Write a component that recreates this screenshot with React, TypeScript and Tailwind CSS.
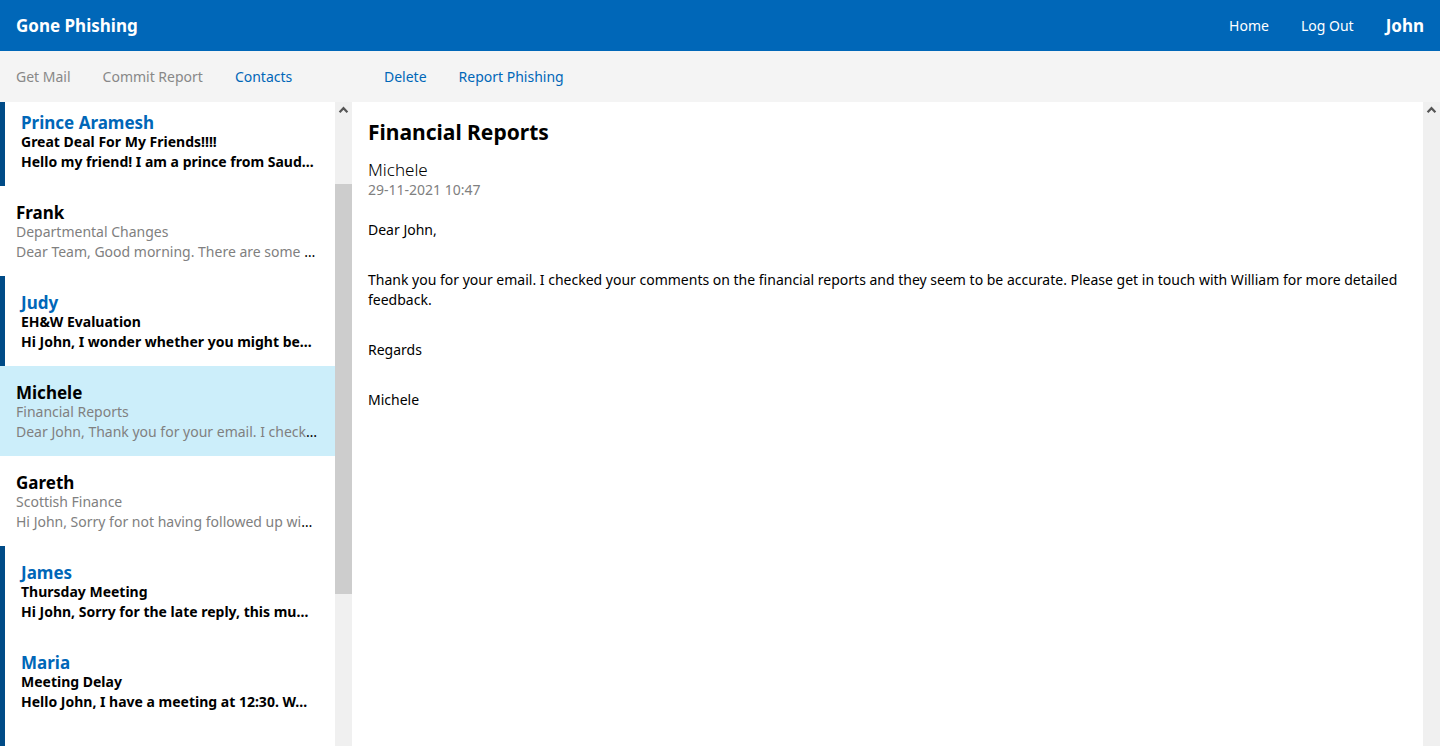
import { clsx } from "clsx";

type Mail = {
  sender: string;
  subject: string;
  preview: string;
  unread?: boolean;
  selected?: boolean;
};

const mails: Mail[] = [
  { sender: "Prince Aramesh", subject: "Great Deal For My Friends!!!!", preview: "Hello my friend! I am a prince from Saud", unread: true },
  { sender: "Frank", subject: "Departmental Changes", preview: "Dear Team, Good morning. There are some " },
  { sender: "Judy", subject: "EH&W Evaluation", preview: "Hi John, I wonder whether you might be", unread: true },
  { sender: "Michele", subject: "Financial Reports", preview: "Dear John, Thank you for your email. I check", selected: true },
  { sender: "Gareth", subject: "Scottish Finance", preview: "Hi John, Sorry for not having followed up wi" },
  { sender: "James", subject: "Thursday Meeting", preview: "Hi John, Sorry for the late reply, this mu", unread: true },
  { sender: "Maria", subject: "Meeting Delay", preview: "Hello John, I have a meeting at 12:30. W", unread: true },
];

function MailRow({ mail, first }: { mail: Mail; first: boolean }) {
  return (
    <li>
      <button
        type="button"
        aria-pressed={!!mail.selected}
        className={clsx(
          "block w-full overflow-hidden whitespace-nowrap px-4 pb-3.5 text-left leading-5",
          first ? "pt-3" : "pt-[18px]",
          mail.unread ? "border-l-[5px] border-[#004b87] text-[14px] font-bold text-black" : "text-[14px] text-[#808080]",
          mail.selected && "bg-[#cceefa]",
        )}
      >
        <span className={clsx("block text-[17px] leading-[18px] font-bold", mail.unread ? "text-[#0067b8]" : "text-black")}>
          {mail.sender}
        </span>
        <span className="block">{mail.subject}</span>
        <span className="block">
          {mail.preview}
          <span className="text-black">…</span>
        </span>
      </button>
    </li>
  );
}

function Scrollbar({ thumb }: { thumb?: boolean }) {
  return (
    <div aria-hidden="true" className="flex w-[17px] shrink-0 flex-col bg-[#f0f0f0]">
      <svg viewBox="0 0 17 17" className="h-[17px] w-[17px] shrink-0">
        <path d="M4.6 10.2 8.5 6.2 12.4 10.2" fill="none" stroke="#555" strokeWidth="2.2" />
      </svg>
      {thumb && <div className="mt-[65px] h-[410px] bg-[#cdcdcd]" />}
    </div>
  );
}

export default function App() {
  return (
    <div className="flex h-screen flex-col overflow-hidden bg-white font-['Noto_Sans','Open_Sans',sans-serif] text-[14px] leading-5 text-black">
      <header className="flex h-[51px] shrink-0 items-center justify-between bg-[#0067b8] px-4 text-white">
        <h1 className="text-[17px] font-bold">Gone Phishing</h1>
        <nav className="flex items-center gap-8">
          <a href="#home">Home</a>
          <a href="#logout">Log Out</a>
          <span className="text-[17px] font-bold">John</span>
        </nav>
      </header>

      <div className="flex h-[51px] shrink-0 items-center bg-[#f4f4f4] text-[#0067b8]">
        <div className="flex w-[352px] gap-8 px-4">
          <button type="button" disabled className="text-[#888888]">Get Mail</button>
          <button type="button" disabled className="text-[#888888]">Commit Report</button>
          <button type="button">Contacts</button>
        </div>
        <div className="flex gap-8 px-8">
          <button type="button">Delete</button>
          <button type="button">Report Phishing</button>
        </div>
      </div>

      <div className="flex min-h-0 flex-1">
        <aside className="flex w-[352px] shrink-0">
          <div className="flex min-w-0 flex-1 flex-col overflow-hidden">
            <ul>
              {mails.map((mail, i) => (
                <MailRow key={mail.sender} mail={mail} first={i === 0} />
              ))}
            </ul>
            <div className="flex-1 border-l-[5px] border-[#004b87]" />
          </div>
          <Scrollbar thumb />
        </aside>

        <main className="min-w-0 flex-1 p-4">
          <h2 className="text-[21px] leading-7 font-bold">Financial Reports</h2>
          <p className="mt-3.5 text-[17px] leading-5 font-light">Michele</p>
          <p className="text-[#808080]">29-11-2021 10:47</p>
          <div className="mt-5 flex flex-col gap-[30px]">
            <p>Dear John,</p>
            <p>
              Thank you for your email. I checked your comments on the financial reports and they seem to be accurate.
              Please get in touch with William for more detailed feedback.
            </p>
            <p>Regards</p>
            <p>Michele</p>
          </div>
        </main>
        <Scrollbar />
      </div>
    </div>
  );
}
